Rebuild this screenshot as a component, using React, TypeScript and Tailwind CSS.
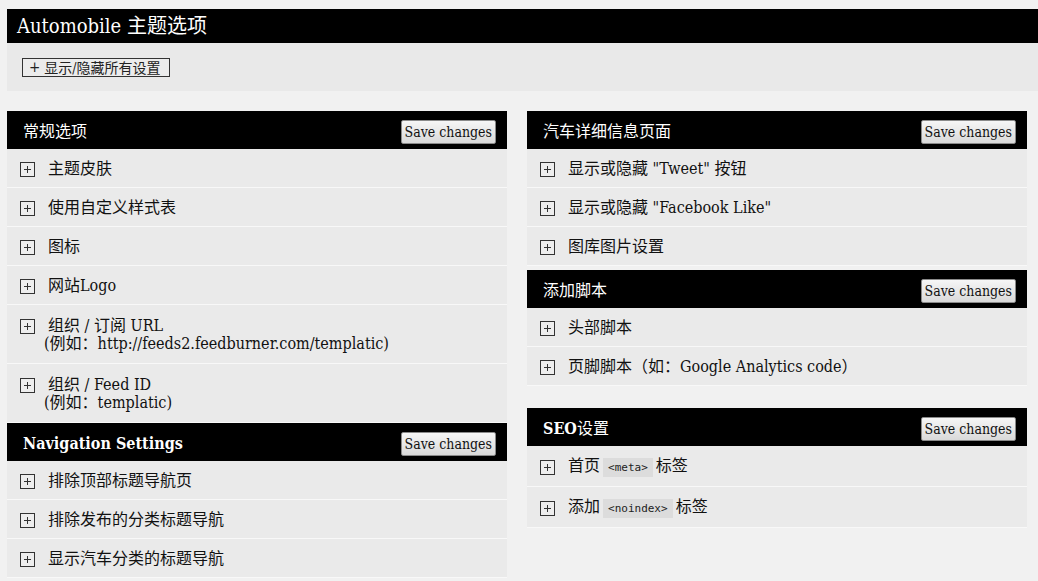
import React from "react";

const serif = "font-['DejaVu_Serif','Noto_Sans_CJK_SC',serif] font-stretch-condensed";

const PlusBox = () => (
  <span className="flex h-[15px] w-[15px] shrink-0 items-center justify-center border border-[#333] bg-[#eee]">
    <svg width="9" height="9" viewBox="0 0 9 9">
      <path d="M4.5 1v7M1 4.5h7" stroke="#333" strokeWidth="1" />
    </svg>
  </span>
);

const SaveButton = () => (
  <button className="h-[24px] rounded-[2px] border border-[#8a8a8a] bg-gradient-to-b from-[#f6f6f6] to-[#d9d9d9] px-[3px] text-[14px] leading-none text-[#111]">
    Save changes
  </button>
);

const Code = ({ children }: { children: React.ReactNode }) => (
  <code className="mx-[3px] bg-[#dcdcdc] px-[5px] py-[3px] font-['DejaVu_Sans_Mono',monospace] text-[11px] text-[#222]">
    {children}
  </code>
);

type Row = { label: React.ReactNode; note?: string; tall?: boolean };

const Section = ({
  title,
  bold,
  rows,
  className = "",
}: {
  title: React.ReactNode;
  bold?: boolean;
  rows: Row[];
  className?: string;
}) => (
  <div className={className}>
    <div className="flex h-[38px] items-center justify-between bg-black pl-[16px] pr-[11px] pt-[4px]">
      <span className={`text-[16px] text-white ${bold ? "font-bold" : ""}`}>{title}</span>
      <SaveButton />
    </div>
    {rows.map((r, i) => (
      <div
        key={i}
        className={`border-b border-[#f8f8f8] bg-[#eaeaea] pl-[13px] ${r.note ? "pb-[10px] pt-[12px]" : r.tall ? "flex h-[41px] items-center pt-[2px]" : "flex h-[39px] items-center pt-[2px]"}`}
      >
        <div className="flex items-center">
          <PlusBox />
          <span className="ml-[13px] text-[16px] leading-[18px] text-[#111]">{r.label}</span>
        </div>
        {r.note && <div className="ml-[24px] text-[16px] leading-[18px] text-[#111]">{r.note}</div>}
      </div>
    ))}
  </div>
);

export default function App() {
  return (
    <div className={`min-h-[581px] bg-[#f1f1f1] pl-[7px] pt-[9px] ${serif}`}>
      <div className="flex h-[34px] items-center bg-black pl-[10px]">
        <h1 className="text-[20px] text-white">Automobile 主题选项</h1>
      </div>
      <div className="h-[48px] bg-[#e9e9e9] pl-[15px] pt-[15px]">
        <button className="flex h-[19px] items-center border border-[#333] bg-[#ececec] pl-[6px] pr-[8px] text-[14px] leading-none text-[#222]">
          <span className="mr-[4px] text-[15px]">+</span>显示/隐藏所有设置
        </button>
      </div>
      <div className="mt-[20px] flex gap-[20px]">
        <div className="w-[500px]">
          <Section
            title="常规选项"
            rows={[
              { label: "主题皮肤" },
              { label: "使用自定义样式表" },
              { label: "图标" },
              { label: "网站Logo" },
              { label: "组织 / 订阅 URL", note: "(例如：http://feeds2.feedburner.com/templatic)" },
              { label: "组织 / Feed ID", note: "(例如：templatic)" },
            ]}
          />
          <Section
            title="Navigation Settings"
            bold
            rows={[
              { label: "排除顶部标题导航页" },
              { label: "排除发布的分类标题导航" },
              { label: "显示汽车分类的标题导航" },
            ]}
          />
        </div>
        <div className="w-[500px]">
          <Section
            title="汽车详细信息页面"
            rows={[
              { label: '显示或隐藏 "Tweet" 按钮' },
              { label: '显示或隐藏 "Facebook Like"' },
              { label: "图库图片设置" },
            ]}
          />
          <Section
            title="添加脚本"
            className="mt-[4px]"
            rows={[{ label: "头部脚本" }, { label: "页脚脚本（如：Google Analytics code）" }]}
          />
          <Section
            title={
              <>
                <b>SEO</b>设置
              </>
            }
            className="mt-[22px]"
            rows={[
              {
                tall: true,
                label: (
                  <>
                    首页<Code>&lt;meta&gt;</Code>标签
                  </>
                ),
              },
              {
                tall: true,
                label: (
                  <>
                    添加<Code>&lt;noindex&gt;</Code>标签
                  </>
                ),
              },
            ]}
          />
        </div>
      </div>
    </div>
  );
}
